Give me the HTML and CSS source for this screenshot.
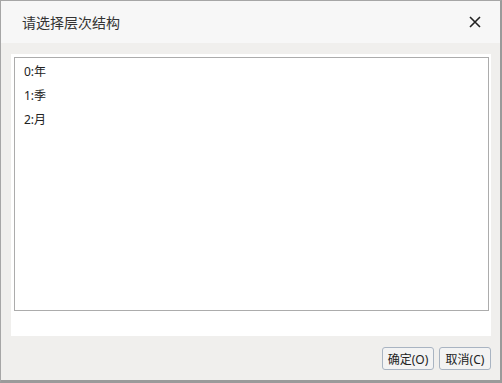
FILE: index.html
```html
<!DOCTYPE html>
<html lang="zh">
<head>
    <meta charset="UTF-8">
    <title>请选择层次结构</title>
    <link rel="stylesheet" href="styles.css">
</head>
<body>
    <div class="dialog">
        <div class="title-bar">
            <span class="title">请选择层次结构</span>
            <span class="close">
                <svg width="12" height="12" viewBox="0 0 12 12">
                    <path d="M1 1 L11 11 M11 1 L1 11" stroke="#222" stroke-width="1.6" fill="none"/>
                </svg>
            </span>
        </div>
        <div class="content">
            <div class="panel">
                <ul class="list">
                    <li>0:年</li>
                    <li>1:季</li>
                    <li>2:月</li>
                </ul>
            </div>
            <div class="buttons">
                <button class="btn">确定(O)</button>
                <button class="btn">取消(C)</button>
            </div>
        </div>
    </div>
</body>
</html>
```

FILE: styles.css
```css
html, body {
    margin: 0;
    padding: 0;
}
body {
    font-family: "Noto Sans", "Noto Sans CJK SC", sans-serif;
    font-size: 12px;
    color: #222;
}
.dialog {
    width: 502px;
    height: 383px;
    box-sizing: border-box;
    border: 1px solid #a6a6a6;
    border-right: 2px solid #9a9a9a;
    border-bottom: 3px solid #9a9a9a;
    background: #f0efed;
    display: flex;
    flex-direction: column;
}
.title-bar {
    height: 42px;
    background: #f7f7f7;
    display: flex;
    align-items: center;
    justify-content: space-between;
    padding: 0 19px 0 21px;
}
.title {
    font-size: 14px;
    color: #333;
}
.close {
    display: flex;
    width: 12px;
    height: 12px;
}
.content {
    padding: 11px 9px 0 10px;
}
.panel {
    background: #fff;
    height: 282px;
    padding: 3px 2px 0 3px;
    box-sizing: border-box;
}
.list {
    margin: 0;
    padding: 4px 9px;
    list-style: none;
    height: 254px;
    box-sizing: border-box;
    border: 1px solid #acacac;
}
.list li {
    height: 24px;
    line-height: 20px;
}
.buttons {
    display: flex;
    justify-content: flex-end;
    gap: 5px;
    margin-top: 11px;
}
.btn {
    font-family: inherit;
    font-size: 12px;
    color: #222;
    width: 52px;
    height: 23px;
    padding: 0;
    background: #f3f3f3;
    border: 1px solid #a9b4c2;
    border-radius: 3px;
}
```
